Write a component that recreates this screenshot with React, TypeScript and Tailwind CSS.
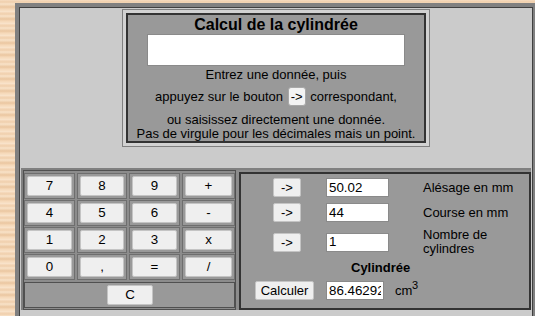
import React from "react";

const keyBtn =
  "w-full h-[20px] bg-[#efefef] border border-[#c4c4c4] rounded-[2px] text-[13.33px] leading-none text-black flex items-center justify-center";
const smallBtn =
  "h-[19px] bg-[#efefef] border border-[#c4c4c4] rounded-[2px] text-[13px] leading-none text-black flex items-center justify-center";
const inputCls =
  "h-[19px] bg-white border border-[#8a8a8a] px-[2px] text-[13.33px] text-black outline-none font-['Liberation_Sans',Arial,sans-serif]";

function Cell({ children }: { children: React.ReactNode }) {
  return (
    <div className="border border-[#6e6e6e] bg-[#999999] p-[2px]">{children}</div>
  );
}

export default function App() {
  const keys = ["7", "8", "9", "+", "4", "5", "6", "-", "1", "2", "3", "x", "0", ",", "=", "/"];
  return (
    <div className="w-[535px] h-[316px] overflow-hidden bg-[repeating-linear-gradient(180deg,#f6dcc0_0px,#efcfac_2px,#f8e2c8_4px,#eac6a0_7px,#f5d8b8_9px,#f9e4cc_12px)] pt-[3px] pl-[15px] font-['Liberation_Sans',Arial,sans-serif] text-black">
      <div className="w-[522px] border-4 border-[#808080]">
        <div className="border border-[#404040] bg-[#cbcbcb] h-[400px]">
          {/* top panel */}
          <div className="flex justify-center pt-[1px]">
            <div className="border border-[#808080] bg-[#d2d2d2] p-[3px]">
              <div className="w-[300px] h-[130px] border-2 border-[#333333] bg-[#999999] flex flex-col items-center">
                <div className="mt-[1px] text-[16px] font-bold leading-[18px] h-[18px]">Calcul de la cylindrée</div>
                <div className="w-[258px] h-[34px] bg-white border border-[#8a8a8a]" />
                <div className="mt-[1px] text-[13px] leading-[16px]">Entrez une donnée, puis</div>
                <div className="mt-[3px] h-[22px] flex items-center text-[13px] whitespace-pre">
                  <span>appuyez sur le bouton </span>
                  <span className="w-[18px] h-[19px] mx-[1px] bg-[#f3f3f3] border border-[#a8a8a8] rounded-[3px] text-[13px] flex items-center justify-center">-&gt;</span>
                  <span> correspondant,</span>
                </div>
                <div className="mt-[6px] text-[13px] leading-[14px]">ou saisissez directement une donnée.</div>
                <div className="text-[13px] leading-[14px]">Pas de virgule pour les décimales mais un point.</div>
              </div>
            </div>
          </div>

          {/* bottom */}
          <div className="mt-[21px] ml-[1px] w-[510px] flex items-start border-t-2 border-l-2 border-[#808080] bg-[#8c8c8c]">
            {/* keypad */}
            <div className="border border-[#505050] pt-[2px] pb-[1px]">
              <div className="grid grid-cols-[51px_50px_51px_53px] gap-x-[2px] gap-y-[1px]">
                {keys.map((k) => (
                  <Cell key={k}>
                    <div className={keyBtn}>{k}</div>
                  </Cell>
                ))}
              </div>
              <div className="mt-[2px] border border-[#505050] bg-[#999999] p-[2px] flex justify-center pl-[3px]">
                <div className="w-[46px] h-[20px] bg-[#efefef] border border-[#c4c4c4] rounded-[2px] text-[13.33px] flex items-center justify-center">C</div>
              </div>
            </div>

            {/* right panel */}
            <div className="ml-[3px] mt-[2px] w-[292px] h-[138px] border-2 border-[#333333] bg-[#999999] text-[13px]">
              <div className="mt-[4px] flex items-center h-[19px]">
                <div className="w-[85px] pl-[32px]">
                  <div className={smallBtn + " w-[28px]"}>-&gt;</div>
                </div>
                <input className={inputCls + " w-[63px]"} defaultValue="50.02" />
                <span className="ml-[34px]">Alésage en mm</span>
              </div>
              <div className="mt-[6px] flex items-center h-[19px]">
                <div className="w-[85px] pl-[32px]">
                  <div className={smallBtn + " w-[28px]"}>-&gt;</div>
                </div>
                <input className={inputCls + " w-[63px]"} defaultValue="44" />
                <span className="ml-[34px]">Course en mm</span>
              </div>
              <div className="mt-[6px] flex items-center h-[28px]">
                <div className="w-[85px] pl-[32px]">
                  <div className={smallBtn + " w-[28px]"}>-&gt;</div>
                </div>
                <input className={inputCls + " w-[63px]"} defaultValue="1" />
                <span className="ml-[34px] leading-[14px]">
                  Nombre de
                  <br />
                  cylindres
                </span>
              </div>
              <div className="mt-[4px] ml-[110px] font-bold leading-[15px]">Cylindrée</div>
              <div className="mt-[6px] flex items-center h-[19px]">
                <div className="w-[85px] pl-[14px]">
                  <div className={smallBtn + " w-[59px] text-[13.33px]"}>Calculer</div>
                </div>
                <input className={inputCls + " w-[58px]"} defaultValue="86.462924" />
                <span className="ml-[11px] relative">
                  cm<span className="absolute left-[17px] -top-[4px] text-[11px]">3</span>
                </span>
              </div>
            </div>
          </div>
        </div>
      </div>
    </div>
  );
}
